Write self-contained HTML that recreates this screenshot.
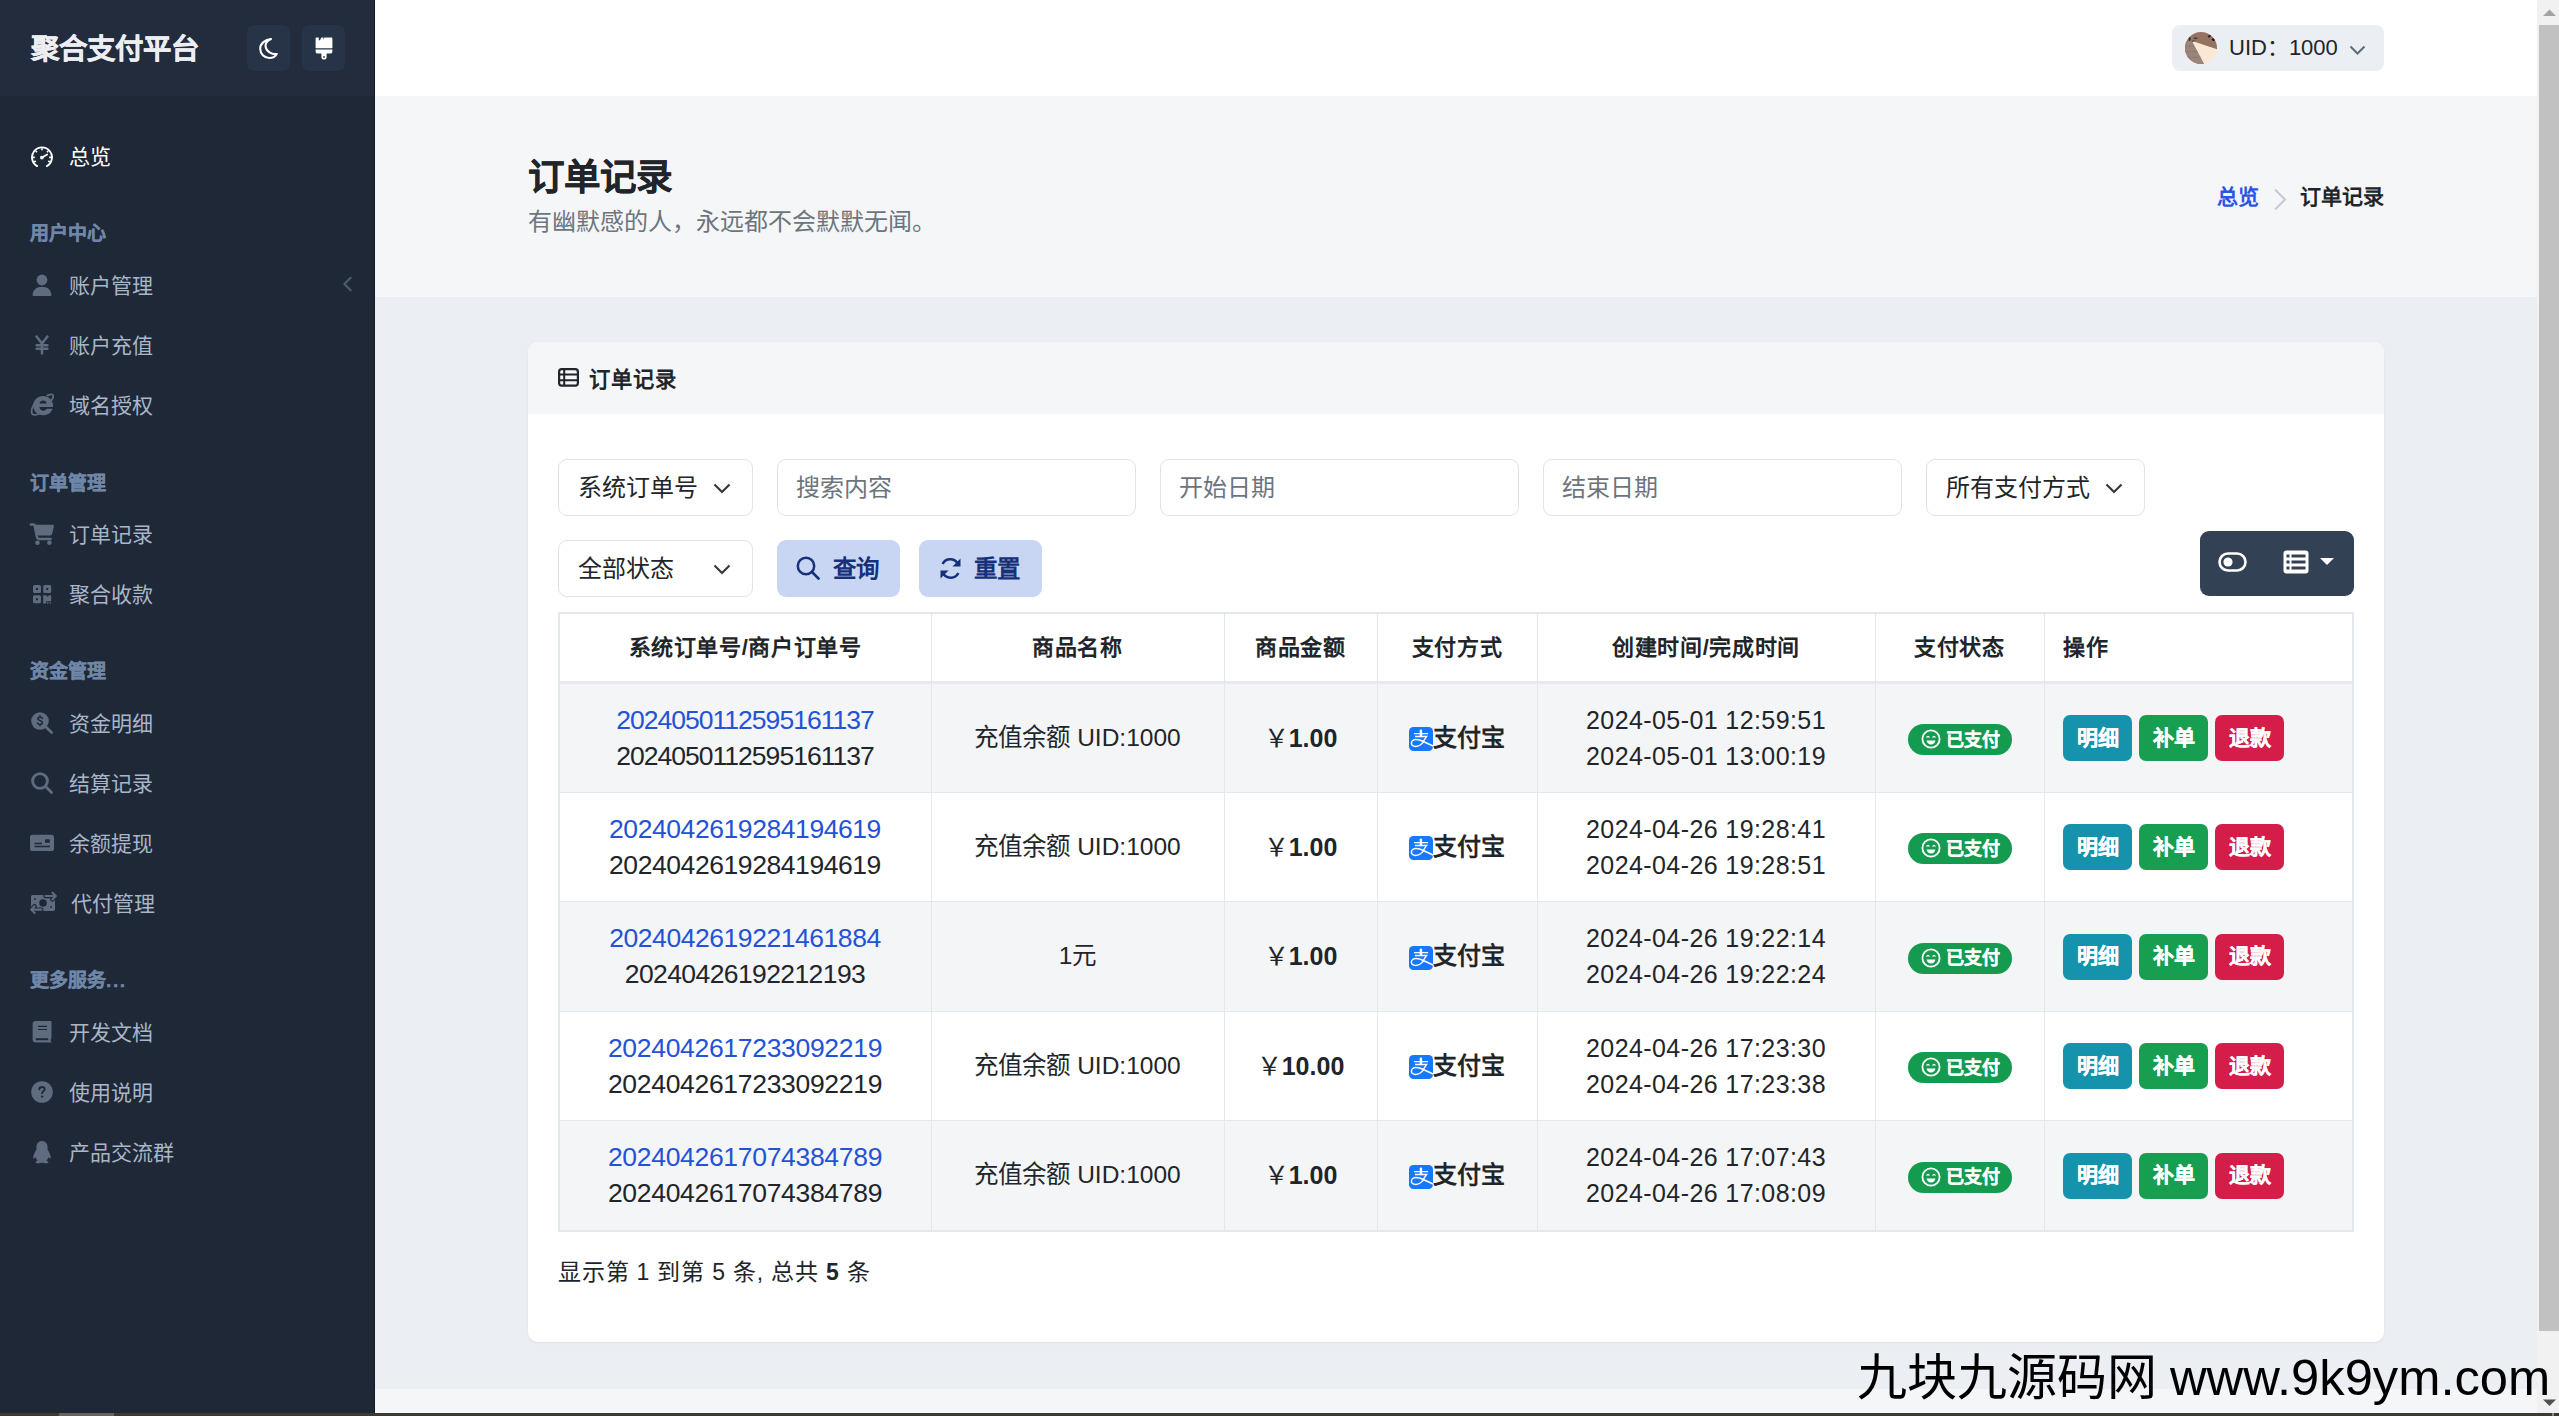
<!DOCTYPE html>
<html lang="zh-CN">
<head>
<meta charset="utf-8">
<title>订单记录</title>
<style>
*{margin:0;padding:0;box-sizing:border-box}
html,body{width:2559px;height:1416px;overflow:hidden}
body{position:relative;background:#ebeef3;font-family:"Liberation Sans",sans-serif;color:#1f2328}
.a{position:absolute}
svg{display:block}
/* sidebar */
#side{left:0;top:0;width:375px;height:1413px;background:#1f2837;border-right:1px solid #131b28}
#sidehead{left:0;top:0;width:374px;height:96px;background:#222c3c}
.brand{left:30.5px;top:29px;font-size:28.4px;line-height:40px;font-weight:bold;color:#eceef2;-webkit-text-stroke:0.4px #eceef2;white-space:nowrap}
.hbtn{top:25px;width:43px;height:46px;border-radius:7px;background:#273346}
.ic{position:absolute}
.tx{position:absolute;left:69px;line-height:30px;margin-top:1px;font-size:21px;color:#a9b6c8;white-space:nowrap}
.sec{position:absolute;left:30px;margin-top:1.5px;font-size:19px;font-weight:bold;-webkit-text-stroke:0.35px #6e86a8;color:#6e86a8;line-height:30px;white-space:nowrap}
/* main */
#top{left:375px;top:0;width:2162px;height:96px;background:#fff;box-shadow:0 1px 2px rgba(0,0,0,0.04)}
#phead{left:375px;top:96px;width:2162px;height:201px;background:#f5f6f8}
#foot{left:375px;top:1389px;width:2162px;height:24px;background:#f5f6f8}
#hscroll{left:0;top:1413px;width:2559px;height:3px;background:#3c3a33}
#vscroll{left:2537px;top:0;width:22px;height:1413px;background:#f1f1f1}

.t{position:absolute;white-space:nowrap;line-height:30px}
.user{left:2172px;top:25px;width:212px;height:46px;border-radius:8px;background:#ebeef3}
.card{left:528px;top:342px;width:1856px;height:1000px;background:#fff;border-radius:10px;overflow:hidden;box-shadow:0 1px 3px rgba(20,30,50,0.06)}
.cardhead{left:528px;top:342px;width:1856px;height:72px;background:#f5f6f8;border-radius:10px 10px 0 0}
.inp{position:absolute;top:459px;height:57px;border:1.5px solid #dfe3ea;border-radius:9px;background:#fff}
.inp2{top:540px}
.btnq{position:absolute;top:540px;height:57px;border-radius:9px;background:#c8d6f4}
.tb{position:absolute;left:2200px;top:531px;width:154px;height:65px;border-radius:9px;background:#334155}
.vl{position:absolute;width:1px;background:#e3e7ee}
.hl{position:absolute;height:1px;background:#e3e7ee}
.row{position:absolute;left:559px;width:1794px;background:#f4f5f7}
.num{font-size:25px;letter-spacing:0px}
.lk{color:#2452d6}
.badge{position:absolute;width:104px;height:31px;border-radius:16px;background:#159b50}
.ob{position:absolute;width:69px;height:46px;border-radius:7px}
</style>
</head>
<body>

<!-- SIDEBAR -->
<div id="side" class="a"></div>
<div id="sidehead" class="a"></div>
<div class="a brand">聚合支付平台</div>
<div class="a hbtn" style="left:247px"></div>
<div class="a hbtn" style="left:302px"></div>
<div class="tx" style="top:141.0px;color:#fff">总览</div>
<div class="sec" style="top:217.7px">用户中心</div>
<div class="tx" style="top:269.5px">账户管理</div>
<div class="tx" style="top:329.5px">账户充值</div>
<div class="tx" style="top:389.5px">域名授权</div>
<div class="sec" style="top:467.0px">订单管理</div>
<div class="tx" style="top:519.0px">订单记录</div>
<div class="tx" style="top:578.5px">聚合收款</div>
<div class="sec" style="top:655.0px">资金管理</div>
<div class="tx" style="top:707.5px">资金明细</div>
<div class="tx" style="top:767.5px">结算记录</div>
<div class="tx" style="top:827.5px">余额提现</div>
<div class="tx" style="top:887.5px;left:71px">代付管理</div>
<div class="sec" style="top:964.0px">更多服务<span style="letter-spacing:1.6px">...</span></div>
<div class="tx" style="top:1016.5px">开发文档</div>
<div class="tx" style="top:1076.5px">使用说明</div>
<div class="tx" style="top:1136.5px">产品交流群</div>

<div class="ic" style="left:31px;top:146px"><svg width="22" height="22" viewBox="0 0 22 22"><path d="M6.1 20.1A10 10 0 1 1 15.9 20.1" fill="none" stroke="#fff" stroke-width="1.9" stroke-linecap="round"/><path d="M3.03 16.00L4.76 15.00M1.80 11.40L3.80 11.40M4.61 4.78L6.00 6.22M11.00 2.20L11.00 4.20M17.39 4.78L16.00 6.22M20.20 11.40L18.20 11.40M18.97 16.00L17.24 15.00" stroke="#fff" stroke-width="1.6"/><path d="M11 11.5L16.2 8.4" stroke="#fff" stroke-width="1.7" stroke-linecap="round"/><circle cx="10.9" cy="11.6" r="1.9" fill="#fff"/></svg></div>
<div class="ic" style="left:32px;top:274px"><svg width="20" height="23" viewBox="0 0 20 23"><circle cx="10" cy="6" r="5.4" fill="#5f6b7e"/><path d="M0.6 21.2C0.6 16.2 4.6 12.8 10 12.8S19.4 16.2 19.4 21.2C19.4 21.7 19 22 18.5 22H1.5C1 22 0.6 21.7 0.6 21.2z" fill="#5f6b7e"/></svg></div>
<div class="ic" style="left:35px;top:335px"><svg width="14" height="20" viewBox="0 0 14 20"><path d="M1.6 1.6L7 8.6L12.4 1.6M7 8.6V18.6M1.6 10.3H12.4M1.6 13.8H12.4" fill="none" stroke="#5f6b7e" stroke-width="2.5" stroke-linecap="round"/></svg></div>
<div class="ic" style="left:30px;top:393px"><svg width="24" height="24" viewBox="0 0 24 24"><path fill-rule="evenodd" d="M13 3C18.4 3 22.8 7 23 12.2V14H9.4C9.8 16.4 11.3 17.8 13.3 17.8C14.9 17.8 16.1 17 16.8 15.8H22.6C21.4 19.6 17.7 22.3 13 22.3C7.6 22.3 3.2 18 3.2 12.6C3.2 7.3 7.6 3 13 3zM9.5 10.6H16.8C16.4 8.6 14.9 7.4 13.1 7.4C11.3 7.4 9.9 8.6 9.5 10.6z" fill="#5f6b7e"/><path d="M6 8.2C3.2 12 1.2 16.6 1.6 19.6C2 22.4 5.2 22.6 9 20.6" fill="none" stroke="#5f6b7e" stroke-width="1.8" stroke-linecap="round"/><path d="M17.4 2.6C20.6 1 22.8 1 23.2 2.6C23.5 3.8 22.8 5.6 21.6 7.2" fill="none" stroke="#5f6b7e" stroke-width="1.8" stroke-linecap="round"/></svg></div>
<div class="ic" style="left:29px;top:522px"><svg width="26" height="24" viewBox="0 0 26 24"><path d="M1.8 2.6H4.6C5.2 2.6 5.6 3 5.7 3.6L7.8 14.4C8 15.8 9 17 10.6 17H21.6" fill="none" stroke="#5f6b7e" stroke-width="2.5" stroke-linecap="round" stroke-linejoin="round"/><path d="M5.4 2.8H23.8C24.6 2.8 25.1 3.5 24.9 4.3L23.2 11.8C22.9 12.8 22.1 13.4 21.1 13.4H7.4z" fill="#5f6b7e"/><circle cx="8.5" cy="20.7" r="2.3" fill="#5f6b7e"/><circle cx="20.4" cy="20.7" r="2.3" fill="#5f6b7e"/></svg></div>
<div class="ic" style="left:32px;top:584px"><svg width="20" height="20" viewBox="0 0 20 20"><g fill="#5f6b7e"><path fill-rule="evenodd" d="M2.5 1H7.5Q9 1 9 2.5V7.5Q9 9 7.5 9H2.5Q1 9 1 7.5V2.5Q1 1 2.5 1zM4 4V6H6V4z"/><path fill-rule="evenodd" d="M12.7 1H17.7Q19.2 1 19.2 2.5V7.5Q19.2 9 17.7 9H12.7Q11.2 9 11.2 7.5V2.5Q11.2 1 12.7 1zM14.2 4V6H16.2V4z"/><path fill-rule="evenodd" d="M2.5 11.2H7.5Q9 11.2 9 12.7V17.7Q9 19.2 7.5 19.2H2.5Q1 19.2 1 17.7V12.7Q1 11.2 2.5 11.2zM4 14.2V16.2H6V14.2z"/><path d="M11.2 11.2H14.2L15.6 12.8L17 11.2H19.2V17.2H14.2V19.4H11.2z"/><rect x="15" y="18.2" width="1.5" height="1.3"/><rect x="17.6" y="18.2" width="1.5" height="1.3"/></g></svg></div>
<div class="ic" style="left:30px;top:711px"><svg width="24" height="24" viewBox="0 0 24 24"><circle cx="10" cy="10" r="8.8" fill="#5f6b7e"/><path d="M16.2 16.2L21.6 21.6" stroke="#5f6b7e" stroke-width="2.8" stroke-linecap="round"/><path d="M12.4 7.4C12 6.6 11.2 6.2 10 6.2C8.6 6.2 7.8 6.9 7.8 7.8C7.8 9.9 12.4 9 12.4 11.6C12.4 12.6 11.4 13.4 10 13.4C8.8 13.4 7.9 12.9 7.5 12.1M10 4.8V6.2M10 13.4V14.8" fill="none" stroke="#1f2837" stroke-width="1.5" stroke-linecap="round"/></svg></div>
<div class="ic" style="left:30px;top:771px"><svg width="24" height="24" viewBox="0 0 24 24"><circle cx="10" cy="10" r="7.4" fill="none" stroke="#5f6b7e" stroke-width="2.9"/><path d="M15.8 15.8L21.6 21.6" stroke="#5f6b7e" stroke-width="2.8" stroke-linecap="round"/></svg></div>
<div class="ic" style="left:30px;top:834px"><svg width="24" height="18" viewBox="0 0 24 18"><rect x="0" y="0.7" width="24" height="16.3" rx="2.6" fill="#5f6b7e"/><path d="M4.5 9.5H12M4.5 12.5H20" stroke="#1f2837" stroke-width="1.4"/><rect x="15" y="5.2" width="4.8" height="3.6" rx="0.6" fill="#1f2837"/></svg></div>
<div class="ic" style="left:29px;top:891px"><svg width="29" height="24" viewBox="0 0 29 24"><rect x="2" y="4" width="24" height="16" rx="1.8" fill="#5f6b7e"/><circle cx="14" cy="12" r="3.8" fill="#1f2837"/><circle cx="6" cy="8" r="0.9" fill="#1f2837"/><circle cx="22" cy="16" r="0.9" fill="#1f2837"/><path d="M16.6 5H26.2M23.4 1.6L26.8 5L23.4 8.4M12.4 18.6H2.6M5.6 15.2L2.2 18.6L5.6 22" fill="none" stroke="#1f2837" stroke-width="4.4" stroke-linecap="round" stroke-linejoin="round"/><path d="M16.6 5H26.2M23.4 1.6L26.8 5L23.4 8.4M12.4 18.6H2.6M5.6 15.2L2.2 18.6L5.6 22" fill="none" stroke="#5f6b7e" stroke-width="2.1" stroke-linecap="round" stroke-linejoin="round"/></svg></div>
<div class="ic" style="left:32px;top:1020px"><svg width="20" height="24" viewBox="0 0 20 24"><path d="M3.6 1H18.4C19 1 19.5 1.5 19.5 2.1V18C19.5 18.5 19.2 18.9 18.8 19.1V21.2C19.2 21.3 19.5 21.7 19.5 22.2V22.6H3.6C1.8 22.6 0.6 21.4 0.6 19.6V4C0.6 2.2 1.8 1 3.6 1z" fill="#5f6b7e"/><path d="M6 6.4H15M6 9.5H15" stroke="#1f2837" stroke-width="1.2"/><path d="M3.8 18.2H16.2V20.2H3.8z" fill="#1f2837"/></svg></div>
<div class="ic" style="left:30px;top:1080px"><svg width="24" height="24" viewBox="0 0 24 24"><circle cx="12" cy="12" r="10.8" fill="#5f6b7e"/><path d="M9.3 9.4C9.4 7.9 10.5 7 12 7C13.6 7 14.7 7.9 14.7 9.3C14.7 10.9 12.1 11.2 12.1 13.2" fill="none" stroke="#1f2837" stroke-width="1.8" stroke-linecap="round"/><circle cx="12.1" cy="16.6" r="1.2" fill="#1f2837"/></svg></div>
<div class="ic" style="left:32px;top:1140px"><svg width="20" height="24" viewBox="0 0 20 24"><path d="M10 1C6 1 4.4 4.2 4.4 7.4V9.4C3.2 11.4 1.4 14.4 1.2 17.6C1.2 18.4 1.4 18.8 1.8 18.7C2.2 18.6 2.8 18 3.6 17C4 18.6 4.6 19.8 5.6 20.8C4.2 21.2 3.4 21.8 3.6 22.4C3.8 23 5.2 23.2 7.4 23.2C8.8 23.2 9.6 22.9 10 22.6C10.4 22.9 11.2 23.2 12.6 23.2C14.8 23.2 16.2 23 16.4 22.4C16.6 21.8 15.8 21.2 14.4 20.8C15.4 19.8 16 18.6 16.4 17C17.2 18 17.8 18.6 18.2 18.7C18.6 18.8 18.8 18.4 18.8 17.6C18.6 14.4 16.8 11.4 15.6 9.4V7.4C15.6 4.2 14 1 10 1z" fill="#5f6b7e"/></svg></div>
<div class="ic" style="left:342px;top:276px"><svg width="11" height="16" viewBox="0 0 11 16"><path d="M8.6 1.8L2.4 8L8.6 14.2" fill="none" stroke="#4d5b6e" stroke-width="2.2" stroke-linecap="round" stroke-linejoin="round"/></svg></div>
<div class="ic" style="left:258px;top:37px"><svg width="21" height="23" viewBox="0 0 21 23"><path d="M13 2C7.2 2.6 2.2 6.4 2.2 11.6C2.2 16.8 6.2 21 11.4 21C14.6 21 17.2 19.6 18.8 17C13.6 17.6 8.4 14.6 7.6 9.6C7.2 6.4 9.6 3.4 13 2z" fill="none" stroke="#fff" stroke-width="2.1" stroke-linejoin="round"/></svg></div>
<div class="ic" style="left:315px;top:37px"><svg width="18" height="23" viewBox="0 0 18 23"><path d="M1.6 0.6H3.8V3.2H5L6.4 0.6H8.4V2.8L9.4 0.6H16C16.9 0.6 17.4 1.1 17.4 2V11.2H0.6V1.6C0.6 1 1 0.6 1.6 0.6z" fill="#fff"/><path d="M0.6 12.4H17.4V14.2C17.4 15.6 16.6 16.6 15 16.6H11.6V20.2C11.6 21.6 10.4 22.6 9 22.6S6.4 21.6 6.4 20.2V16.6H3C1.4 16.6 0.6 15.6 0.6 14.2z" fill="#fff"/><circle cx="9" cy="19.9" r="0.9" fill="#273346"/></svg></div>
<!-- MAIN -->
<div id="top" class="a"></div>
<div id="phead" class="a"></div>
<div id="foot" class="a"></div>
<div class="a user"></div>
<div class="a" style="left:2185px;top:32px;width:32px;height:32px;border-radius:50%;overflow:hidden"><svg width="32" height="32" viewBox="0 0 32 32"><rect width="32" height="32" fill="#fbe8d4"/><path d="M0 0H32V17.2L6.6 8.8L19 32H0z" fill="#947363"/><path d="M0 10L6.6 8.8L19 32H0z" fill="#9b857a"/><path d="M0 14.2H9.2M0 19.6H12.2M0 25.2H15.6" stroke="#8a7167" stroke-width="0.7"/><ellipse cx="10.6" cy="6.2" rx="2" ry="0.8" fill="#3a2a24"/><ellipse cx="24.4" cy="4.2" rx="1.8" ry="1" transform="rotate(-20 24.4 4.2)" fill="#2e211c"/><ellipse cx="28.6" cy="7.6" rx="1.9" ry="1.3" fill="#1f1714"/><ellipse cx="4.6" cy="7" rx="1" ry="2" fill="#3a2a24"/><path d="M6.8 9.4L9.4 8.8" stroke="#222" stroke-width="0.9"/></svg></div>
<div class="t" style="left:2229px;top:33px;font-size:22px;color:#212529">UID：1000</div>
<div class="a" style="left:2349px;top:45px"><svg width="17" height="11" viewBox="0 0 17 11"><path d="M1.5 1.5L8.5 8.5L15.5 1.5" fill="none" stroke="#5f6b7a" stroke-width="2"/></svg></div>
<div class="t" style="left:528px;top:158px;font-size:36.5px;line-height:40px;font-weight:bold;-webkit-text-stroke:0.4px #212529;color:#212529">订单记录</div>
<div class="t" style="left:528px;top:207px;font-size:24px;color:#6c757d">有幽默感的人，永远都不会默默无闻。</div>
<div class="t" style="left:2217px;top:182px;font-size:21px;font-weight:bold;color:#2a55e5">总览</div>
<div class="a" style="left:2273px;top:188px"><svg width="14" height="23" viewBox="0 0 14 23"><path d="M2 1.5L12 11.5L2 21.5" fill="none" stroke="#c3cad5" stroke-width="2"/></svg></div>
<div class="t" style="left:2300px;top:182px;font-size:21px;font-weight:bold;color:#212529">订单记录</div>
<div class="a card"></div>
<div class="a cardhead"></div>
<div class="a" style="left:558px;top:368px"><svg width="21" height="19" viewBox="0 0 21 19"><rect x="1.1" y="1.1" width="18.8" height="16.6" rx="2.6" fill="none" stroke="#212529" stroke-width="2.2"/><path d="M1.5 6.6H19.5M1.5 12.2H19.5M6.2 1.5V17.5" stroke="#212529" stroke-width="2"/></svg></div>
<div class="t" style="left:588.5px;top:364.5px;font-size:21.3px;font-weight:bold;letter-spacing:1px;color:#212529">订单记录</div>
<div class="inp" style="left:558px;width:195px"></div>
<div class="t" style="left:578px;top:473px;font-size:24px;color:#212529">系统订单号</div>
<div class="a" style="left:713px;top:483px"><svg width="18" height="11" viewBox="0 0 18 11"><path d="M1.5 1.5L9 9L16.5 1.5" fill="none" stroke="#343a40" stroke-width="2.2"/></svg></div>
<div class="inp" style="left:777px;width:359px"></div>
<div class="t" style="left:796px;top:473px;font-size:24px;color:#6c757d">搜索内容</div>
<div class="inp" style="left:1160px;width:359px"></div>
<div class="t" style="left:1179px;top:473px;font-size:24px;color:#6c757d">开始日期</div>
<div class="inp" style="left:1543px;width:359px"></div>
<div class="t" style="left:1562px;top:473px;font-size:24px;color:#6c757d">结束日期</div>
<div class="inp" style="left:1926px;width:219px"></div>
<div class="t" style="left:1946px;top:473px;font-size:24px;color:#212529">所有支付方式</div>
<div class="a" style="left:2105px;top:483px"><svg width="18" height="11" viewBox="0 0 18 11"><path d="M1.5 1.5L9 9L16.5 1.5" fill="none" stroke="#343a40" stroke-width="2.2"/></svg></div>
<div class="inp inp2" style="left:558px;width:195px"></div>
<div class="t" style="left:578px;top:554px;font-size:24px;color:#212529">全部状态</div>
<div class="a" style="left:713px;top:564px"><svg width="18" height="11" viewBox="0 0 18 11"><path d="M1.5 1.5L9 9L16.5 1.5" fill="none" stroke="#343a40" stroke-width="2.2"/></svg></div>
<div class="btnq" style="left:777px;width:123px"></div>
<div class="a" style="left:796px;top:556px"><svg width="25" height="25" viewBox="0 0 25 25"><circle cx="10" cy="10" r="8.2" fill="none" stroke="#16307a" stroke-width="2.5"/><path d="M16 16L22.6 22.6" stroke="#16307a" stroke-width="2.7" stroke-linecap="round"/></svg></div>
<div class="t" style="left:833px;top:554px;font-size:23.5px;font-weight:bold;color:#16307a">查询</div>
<div class="btnq" style="left:919px;width:123px"></div>
<div class="a" style="left:939px;top:557px"><svg width="23" height="23" viewBox="0 0 23 23"><path d="M19.4 8.2A8.6 8.6 0 0 0 3.6 7" fill="none" stroke="#16307a" stroke-width="2.5"/><path d="M3.6 14.8A8.6 8.6 0 0 0 19.4 16" fill="none" stroke="#16307a" stroke-width="2.5"/><path d="M21.5 1.5V9.5H13.5z" fill="#16307a"/><path d="M1.5 21.5V13.5H9.5z" fill="#16307a"/></svg></div>
<div class="t" style="left:974px;top:554px;font-size:23.5px;font-weight:bold;color:#16307a">重置</div>
<div class="tb"></div>
<div class="a" style="left:2218px;top:552px"><svg width="30" height="20" viewBox="0 0 30 20"><rect x="1.5" y="1.5" width="26" height="17" rx="8.5" fill="none" stroke="#fff" stroke-width="2.6"/><circle cx="10" cy="10" r="4.6" fill="#fff"/></svg></div>
<div class="a" style="left:2283px;top:550px"><svg width="26" height="24" viewBox="0 0 26 24"><rect x="0.5" y="0.5" width="25" height="23" rx="3" fill="#fff"/><g fill="#334155"><rect x="3.5" y="4.5" width="3" height="3"/><rect x="3.5" y="10.5" width="3" height="3"/><rect x="3.5" y="16.5" width="3" height="3"/><rect x="8.5" y="4.5" width="14" height="3"/><rect x="8.5" y="10.5" width="14" height="3"/><rect x="8.5" y="16.5" width="14" height="3"/></g></svg></div>
<div class="a" style="left:2320px;top:558px"><svg width="14" height="7" viewBox="0 0 14 7"><path d="M0 0H14L7 7z" fill="#fff"/></svg></div>
<div class="row" style="top:684px;height:108px"></div>
<div class="row" style="top:901.5px;height:109.5px"></div>
<div class="row" style="top:1120.5px;height:109.5px"></div>
<div class="hl" style="left:558px;top:612px;width:1796px;height:2px"></div>
<div class="hl" style="left:558px;top:681px;width:1796px;height:3px;background:#e6e9ef"></div>
<div class="hl" style="left:558px;top:791.5px;width:1796px"></div>
<div class="hl" style="left:558px;top:901.0px;width:1796px"></div>
<div class="hl" style="left:558px;top:1010.5px;width:1796px"></div>
<div class="hl" style="left:558px;top:1120.0px;width:1796px"></div>
<div class="hl" style="left:558px;top:1230px;width:1796px;height:1.5px"></div>
<div class="vl" style="left:558px;top:612px;height:619px;width:2px"></div>
<div class="vl" style="left:931px;top:612px;height:619px"></div>
<div class="vl" style="left:1224px;top:612px;height:619px"></div>
<div class="vl" style="left:1377px;top:612px;height:619px"></div>
<div class="vl" style="left:1537px;top:612px;height:619px"></div>
<div class="vl" style="left:1875px;top:612px;height:619px"></div>
<div class="vl" style="left:2044px;top:612px;height:619px"></div>
<div class="vl" style="left:2352px;top:612px;height:619px;width:2px"></div>
<div class="t" style="left:559px;width:372px;text-align:center;top:633px;font-size:22px;font-weight:bold;letter-spacing:0.6px;color:#212529">系统订单号/商户订单号</div>
<div class="t" style="left:931px;width:293px;text-align:center;top:633px;font-size:22px;font-weight:bold;letter-spacing:0.6px;color:#212529">商品名称</div>
<div class="t" style="left:1224px;width:153px;text-align:center;top:633px;font-size:22px;font-weight:bold;letter-spacing:0.6px;color:#212529">商品金额</div>
<div class="t" style="left:1377px;width:160px;text-align:center;top:633px;font-size:22px;font-weight:bold;letter-spacing:0.6px;color:#212529">支付方式</div>
<div class="t" style="left:1537px;width:338px;text-align:center;top:633px;font-size:22px;font-weight:bold;letter-spacing:0.6px;color:#212529">创建时间/完成时间</div>
<div class="t" style="left:1875px;width:169px;text-align:center;top:633px;font-size:22px;font-weight:bold;letter-spacing:0.6px;color:#212529">支付状态</div>
<div class="t" style="left:2063px;top:633px;font-size:22px;font-weight:bold;letter-spacing:0.6px;color:#212529">操作</div>
<div class="t" style="left:559px;width:372px;text-align:center;top:704.5px;font-size:26.5px;letter-spacing:-0.98px;color:#2452d6">2024050112595161137</div>
<div class="t" style="left:559px;width:372px;text-align:center;top:740.5px;font-size:26.5px;letter-spacing:-0.98px;color:#212529">2024050112595161137</div>
<div class="t" style="left:931px;width:293px;text-align:center;top:722.5px;font-size:24.5px;color:#212529">充值余额 UID:1000</div>
<div class="t" style="left:1224px;width:153px;text-align:center;top:722.5px;font-size:25px;font-weight:bold;color:#212529"><span style="font-weight:normal">￥</span>1.00</div>
<div class="a" style="left:1409px;top:727.0px;width:24px;height:24px;border-radius:4.5px;background:#1677ff"><svg width="26" height="24" viewBox="0 0 26 24" style="overflow:visible"><path d="M5 6.6H19.1M5.9 9.5H17.6L13.6 15.4" fill="none" stroke="#fff" stroke-width="1.4"/><path d="M11.9 3.6V9" stroke="#fff" stroke-width="2.4" stroke-linecap="round"/><path d="M14.8 14.6C12.4 17.6 9.8 19.4 6.6 19.4C3.8 19.4 2.4 18 2.4 16.2C2.4 14.2 4.4 12.6 7 12.6C9.8 12.6 12.4 13.6 15.4 15L24.6 19.2" fill="none" stroke="#fff" stroke-width="1.5"/></svg></div>
<div class="t" style="left:1433px;top:722.5px;font-size:24px;font-weight:bold;color:#212529">支付宝</div>
<div class="t" style="left:1537px;width:338px;text-align:center;top:704.5px;font-size:25px;letter-spacing:0.41px;color:#212529">2024-05-01 12:59:51</div>
<div class="t" style="left:1537px;width:338px;text-align:center;top:740.5px;font-size:25px;letter-spacing:0.41px;color:#212529">2024-05-01 13:00:19</div>
<div class="badge" style="left:1908px;top:724.10px"></div>
<div class="a" style="left:1921px;top:729.0px"><svg width="20" height="20" viewBox="0 0 20 20"><circle cx="10" cy="10" r="8.6" fill="none" stroke="#fff" stroke-width="1.8"/><path d="M5.6 8.6Q7 6.2 8.4 8.6M11.6 8.6Q13 6.2 14.4 8.6" fill="none" stroke="#fff" stroke-width="1.3"/><path d="M5.6 11.4H14.4C14 14 12.2 15.4 10 15.4S6 14 5.6 11.4z" fill="#fff"/></svg></div>
<div class="t" style="left:1946px;top:724.5px;font-size:18px;font-weight:bold;-webkit-text-stroke:0.3px #fff;color:#fff">已支付</div>
<div class="ob" style="left:2063px;top:715.10px;background:#1593ad"></div>
<div class="t" style="left:2063px;width:69px;text-align:center;top:722.5px;font-size:21px;font-weight:bold;-webkit-text-stroke:0.3px #fff;color:#fff">明细</div>
<div class="ob" style="left:2139px;top:715.10px;background:#179e51"></div>
<div class="t" style="left:2139px;width:69px;text-align:center;top:722.5px;font-size:21px;font-weight:bold;-webkit-text-stroke:0.3px #fff;color:#fff">补单</div>
<div class="ob" style="left:2215px;top:715.10px;background:#d41d48"></div>
<div class="t" style="left:2215px;width:69px;text-align:center;top:722.5px;font-size:21px;font-weight:bold;-webkit-text-stroke:0.3px #fff;color:#fff">退款</div>
<div class="t" style="left:559px;width:372px;text-align:center;top:813.8px;font-size:26.5px;letter-spacing:-0.43px;color:#2452d6">2024042619284194619</div>
<div class="t" style="left:559px;width:372px;text-align:center;top:849.8px;font-size:26.5px;letter-spacing:-0.43px;color:#212529">2024042619284194619</div>
<div class="t" style="left:931px;width:293px;text-align:center;top:831.8px;font-size:24.5px;color:#212529">充值余额 UID:1000</div>
<div class="t" style="left:1224px;width:153px;text-align:center;top:831.8px;font-size:25px;font-weight:bold;color:#212529"><span style="font-weight:normal">￥</span>1.00</div>
<div class="a" style="left:1409px;top:836.2px;width:24px;height:24px;border-radius:4.5px;background:#1677ff"><svg width="26" height="24" viewBox="0 0 26 24" style="overflow:visible"><path d="M5 6.6H19.1M5.9 9.5H17.6L13.6 15.4" fill="none" stroke="#fff" stroke-width="1.4"/><path d="M11.9 3.6V9" stroke="#fff" stroke-width="2.4" stroke-linecap="round"/><path d="M14.8 14.6C12.4 17.6 9.8 19.4 6.6 19.4C3.8 19.4 2.4 18 2.4 16.2C2.4 14.2 4.4 12.6 7 12.6C9.8 12.6 12.4 13.6 15.4 15L24.6 19.2" fill="none" stroke="#fff" stroke-width="1.5"/></svg></div>
<div class="t" style="left:1433px;top:831.8px;font-size:24px;font-weight:bold;color:#212529">支付宝</div>
<div class="t" style="left:1537px;width:338px;text-align:center;top:813.8px;font-size:25px;letter-spacing:0.41px;color:#212529">2024-04-26 19:28:41</div>
<div class="t" style="left:1537px;width:338px;text-align:center;top:849.8px;font-size:25px;letter-spacing:0.41px;color:#212529">2024-04-26 19:28:51</div>
<div class="badge" style="left:1908px;top:833.40px"></div>
<div class="a" style="left:1921px;top:838.2px"><svg width="20" height="20" viewBox="0 0 20 20"><circle cx="10" cy="10" r="8.6" fill="none" stroke="#fff" stroke-width="1.8"/><path d="M5.6 8.6Q7 6.2 8.4 8.6M11.6 8.6Q13 6.2 14.4 8.6" fill="none" stroke="#fff" stroke-width="1.3"/><path d="M5.6 11.4H14.4C14 14 12.2 15.4 10 15.4S6 14 5.6 11.4z" fill="#fff"/></svg></div>
<div class="t" style="left:1946px;top:833.8px;font-size:18px;font-weight:bold;-webkit-text-stroke:0.3px #fff;color:#fff">已支付</div>
<div class="ob" style="left:2063px;top:824.40px;background:#1593ad"></div>
<div class="t" style="left:2063px;width:69px;text-align:center;top:831.8px;font-size:21px;font-weight:bold;-webkit-text-stroke:0.3px #fff;color:#fff">明细</div>
<div class="ob" style="left:2139px;top:824.40px;background:#179e51"></div>
<div class="t" style="left:2139px;width:69px;text-align:center;top:831.8px;font-size:21px;font-weight:bold;-webkit-text-stroke:0.3px #fff;color:#fff">补单</div>
<div class="ob" style="left:2215px;top:824.40px;background:#d41d48"></div>
<div class="t" style="left:2215px;width:69px;text-align:center;top:831.8px;font-size:21px;font-weight:bold;-webkit-text-stroke:0.3px #fff;color:#fff">退款</div>
<div class="t" style="left:559px;width:372px;text-align:center;top:923.2px;font-size:26.5px;letter-spacing:-0.45px;color:#2452d6">2024042619221461884</div>
<div class="t" style="left:559px;width:372px;text-align:center;top:959.2px;font-size:26.5px;letter-spacing:-0.60px;color:#212529">20240426192212193</div>
<div class="t" style="left:931px;width:293px;text-align:center;top:941.2px;font-size:24.5px;color:#212529">1元</div>
<div class="t" style="left:1224px;width:153px;text-align:center;top:941.2px;font-size:25px;font-weight:bold;color:#212529"><span style="font-weight:normal">￥</span>1.00</div>
<div class="a" style="left:1409px;top:945.8px;width:24px;height:24px;border-radius:4.5px;background:#1677ff"><svg width="26" height="24" viewBox="0 0 26 24" style="overflow:visible"><path d="M5 6.6H19.1M5.9 9.5H17.6L13.6 15.4" fill="none" stroke="#fff" stroke-width="1.4"/><path d="M11.9 3.6V9" stroke="#fff" stroke-width="2.4" stroke-linecap="round"/><path d="M14.8 14.6C12.4 17.6 9.8 19.4 6.6 19.4C3.8 19.4 2.4 18 2.4 16.2C2.4 14.2 4.4 12.6 7 12.6C9.8 12.6 12.4 13.6 15.4 15L24.6 19.2" fill="none" stroke="#fff" stroke-width="1.5"/></svg></div>
<div class="t" style="left:1433px;top:941.2px;font-size:24px;font-weight:bold;color:#212529">支付宝</div>
<div class="t" style="left:1537px;width:338px;text-align:center;top:923.2px;font-size:25px;letter-spacing:0.41px;color:#212529">2024-04-26 19:22:14</div>
<div class="t" style="left:1537px;width:338px;text-align:center;top:959.2px;font-size:25px;letter-spacing:0.41px;color:#212529">2024-04-26 19:22:24</div>
<div class="badge" style="left:1908px;top:942.80px"></div>
<div class="a" style="left:1921px;top:947.8px"><svg width="20" height="20" viewBox="0 0 20 20"><circle cx="10" cy="10" r="8.6" fill="none" stroke="#fff" stroke-width="1.8"/><path d="M5.6 8.6Q7 6.2 8.4 8.6M11.6 8.6Q13 6.2 14.4 8.6" fill="none" stroke="#fff" stroke-width="1.3"/><path d="M5.6 11.4H14.4C14 14 12.2 15.4 10 15.4S6 14 5.6 11.4z" fill="#fff"/></svg></div>
<div class="t" style="left:1946px;top:943.2px;font-size:18px;font-weight:bold;-webkit-text-stroke:0.3px #fff;color:#fff">已支付</div>
<div class="ob" style="left:2063px;top:933.80px;background:#1593ad"></div>
<div class="t" style="left:2063px;width:69px;text-align:center;top:941.2px;font-size:21px;font-weight:bold;-webkit-text-stroke:0.3px #fff;color:#fff">明细</div>
<div class="ob" style="left:2139px;top:933.80px;background:#179e51"></div>
<div class="t" style="left:2139px;width:69px;text-align:center;top:941.2px;font-size:21px;font-weight:bold;-webkit-text-stroke:0.3px #fff;color:#fff">补单</div>
<div class="ob" style="left:2215px;top:933.80px;background:#d41d48"></div>
<div class="t" style="left:2215px;width:69px;text-align:center;top:941.2px;font-size:21px;font-weight:bold;-webkit-text-stroke:0.3px #fff;color:#fff">退款</div>
<div class="t" style="left:559px;width:372px;text-align:center;top:1032.8px;font-size:26.5px;letter-spacing:-0.31px;color:#2452d6">2024042617233092219</div>
<div class="t" style="left:559px;width:372px;text-align:center;top:1068.8px;font-size:26.5px;letter-spacing:-0.31px;color:#212529">2024042617233092219</div>
<div class="t" style="left:931px;width:293px;text-align:center;top:1050.8px;font-size:24.5px;color:#212529">充值余额 UID:1000</div>
<div class="t" style="left:1224px;width:153px;text-align:center;top:1050.8px;font-size:25px;font-weight:bold;color:#212529"><span style="font-weight:normal">￥</span>10.00</div>
<div class="a" style="left:1409px;top:1055.2px;width:24px;height:24px;border-radius:4.5px;background:#1677ff"><svg width="26" height="24" viewBox="0 0 26 24" style="overflow:visible"><path d="M5 6.6H19.1M5.9 9.5H17.6L13.6 15.4" fill="none" stroke="#fff" stroke-width="1.4"/><path d="M11.9 3.6V9" stroke="#fff" stroke-width="2.4" stroke-linecap="round"/><path d="M14.8 14.6C12.4 17.6 9.8 19.4 6.6 19.4C3.8 19.4 2.4 18 2.4 16.2C2.4 14.2 4.4 12.6 7 12.6C9.8 12.6 12.4 13.6 15.4 15L24.6 19.2" fill="none" stroke="#fff" stroke-width="1.5"/></svg></div>
<div class="t" style="left:1433px;top:1050.8px;font-size:24px;font-weight:bold;color:#212529">支付宝</div>
<div class="t" style="left:1537px;width:338px;text-align:center;top:1032.8px;font-size:25px;letter-spacing:0.41px;color:#212529">2024-04-26 17:23:30</div>
<div class="t" style="left:1537px;width:338px;text-align:center;top:1068.8px;font-size:25px;letter-spacing:0.41px;color:#212529">2024-04-26 17:23:38</div>
<div class="badge" style="left:1908px;top:1052.40px"></div>
<div class="a" style="left:1921px;top:1057.2px"><svg width="20" height="20" viewBox="0 0 20 20"><circle cx="10" cy="10" r="8.6" fill="none" stroke="#fff" stroke-width="1.8"/><path d="M5.6 8.6Q7 6.2 8.4 8.6M11.6 8.6Q13 6.2 14.4 8.6" fill="none" stroke="#fff" stroke-width="1.3"/><path d="M5.6 11.4H14.4C14 14 12.2 15.4 10 15.4S6 14 5.6 11.4z" fill="#fff"/></svg></div>
<div class="t" style="left:1946px;top:1052.8px;font-size:18px;font-weight:bold;-webkit-text-stroke:0.3px #fff;color:#fff">已支付</div>
<div class="ob" style="left:2063px;top:1043.40px;background:#1593ad"></div>
<div class="t" style="left:2063px;width:69px;text-align:center;top:1050.8px;font-size:21px;font-weight:bold;-webkit-text-stroke:0.3px #fff;color:#fff">明细</div>
<div class="ob" style="left:2139px;top:1043.40px;background:#179e51"></div>
<div class="t" style="left:2139px;width:69px;text-align:center;top:1050.8px;font-size:21px;font-weight:bold;-webkit-text-stroke:0.3px #fff;color:#fff">补单</div>
<div class="ob" style="left:2215px;top:1043.40px;background:#d41d48"></div>
<div class="t" style="left:2215px;width:69px;text-align:center;top:1050.8px;font-size:21px;font-weight:bold;-webkit-text-stroke:0.3px #fff;color:#fff">退款</div>
<div class="t" style="left:559px;width:372px;text-align:center;top:1142.2px;font-size:26.5px;letter-spacing:-0.31px;color:#2452d6">2024042617074384789</div>
<div class="t" style="left:559px;width:372px;text-align:center;top:1178.2px;font-size:26.5px;letter-spacing:-0.31px;color:#212529">2024042617074384789</div>
<div class="t" style="left:931px;width:293px;text-align:center;top:1160.2px;font-size:24.5px;color:#212529">充值余额 UID:1000</div>
<div class="t" style="left:1224px;width:153px;text-align:center;top:1160.2px;font-size:25px;font-weight:bold;color:#212529"><span style="font-weight:normal">￥</span>1.00</div>
<div class="a" style="left:1409px;top:1164.8px;width:24px;height:24px;border-radius:4.5px;background:#1677ff"><svg width="26" height="24" viewBox="0 0 26 24" style="overflow:visible"><path d="M5 6.6H19.1M5.9 9.5H17.6L13.6 15.4" fill="none" stroke="#fff" stroke-width="1.4"/><path d="M11.9 3.6V9" stroke="#fff" stroke-width="2.4" stroke-linecap="round"/><path d="M14.8 14.6C12.4 17.6 9.8 19.4 6.6 19.4C3.8 19.4 2.4 18 2.4 16.2C2.4 14.2 4.4 12.6 7 12.6C9.8 12.6 12.4 13.6 15.4 15L24.6 19.2" fill="none" stroke="#fff" stroke-width="1.5"/></svg></div>
<div class="t" style="left:1433px;top:1160.2px;font-size:24px;font-weight:bold;color:#212529">支付宝</div>
<div class="t" style="left:1537px;width:338px;text-align:center;top:1142.2px;font-size:25px;letter-spacing:0.41px;color:#212529">2024-04-26 17:07:43</div>
<div class="t" style="left:1537px;width:338px;text-align:center;top:1178.2px;font-size:25px;letter-spacing:0.41px;color:#212529">2024-04-26 17:08:09</div>
<div class="badge" style="left:1908px;top:1161.80px"></div>
<div class="a" style="left:1921px;top:1166.8px"><svg width="20" height="20" viewBox="0 0 20 20"><circle cx="10" cy="10" r="8.6" fill="none" stroke="#fff" stroke-width="1.8"/><path d="M5.6 8.6Q7 6.2 8.4 8.6M11.6 8.6Q13 6.2 14.4 8.6" fill="none" stroke="#fff" stroke-width="1.3"/><path d="M5.6 11.4H14.4C14 14 12.2 15.4 10 15.4S6 14 5.6 11.4z" fill="#fff"/></svg></div>
<div class="t" style="left:1946px;top:1162.2px;font-size:18px;font-weight:bold;-webkit-text-stroke:0.3px #fff;color:#fff">已支付</div>
<div class="ob" style="left:2063px;top:1152.80px;background:#1593ad"></div>
<div class="t" style="left:2063px;width:69px;text-align:center;top:1160.2px;font-size:21px;font-weight:bold;-webkit-text-stroke:0.3px #fff;color:#fff">明细</div>
<div class="ob" style="left:2139px;top:1152.80px;background:#179e51"></div>
<div class="t" style="left:2139px;width:69px;text-align:center;top:1160.2px;font-size:21px;font-weight:bold;-webkit-text-stroke:0.3px #fff;color:#fff">补单</div>
<div class="ob" style="left:2215px;top:1152.80px;background:#d41d48"></div>
<div class="t" style="left:2215px;width:69px;text-align:center;top:1160.2px;font-size:21px;font-weight:bold;-webkit-text-stroke:0.3px #fff;color:#fff">退款</div>
<div class="t" style="left:558px;top:1257px;font-size:23px;letter-spacing:0.8px;color:#212529">显示第 1 到第 5 条, 总共 <b>5</b> 条</div>

<div id="vscroll" class="a"></div>
<div class="a" style="left:375px;top:1412px;width:2162px;height:1px;background:#fbfbfc"></div>
<div id="hscroll" class="a"></div>
<div class="a" style="left:2552px;top:1413px;width:2px;height:3px;background:#8c8a85"></div>
<div class="a" style="left:2539px;top:25px;width:20px;height:1306px;background:#c1c1c1"></div>
<div class="a" style="left:2543px;top:9px"><svg width="13" height="8" viewBox="0 0 13 8"><path d="M0 7L6.5 0.5L13 7z" fill="#a3a3a3"/></svg></div>
<div class="a" style="left:2543px;top:1399px"><svg width="13" height="8" viewBox="0 0 13 8"><path d="M0 0.5H13L6.5 7z" fill="#505050"/></svg></div>
<div class="a" style="left:59px;top:1413px;width:55px;height:3px;background:#66645e"></div>
<div class="t" style="left:1857px;top:1348px;line-height:60px;font-size:50px;font-weight:500;color:#000">九块九源码网</div><div class="t" style="left:2170px;top:1348px;line-height:60px;font-size:50.7px;color:#000">www.9k9ym.com</div>
</body>
</html>
